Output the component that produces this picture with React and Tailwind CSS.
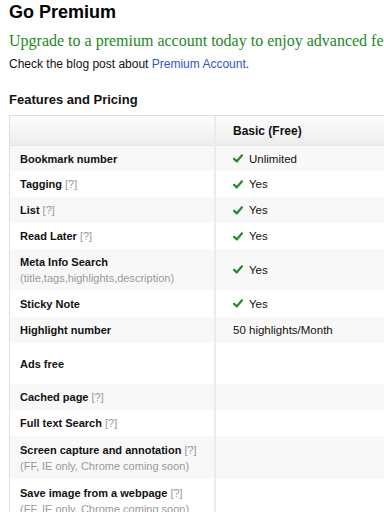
import React from "react";

const Check = () => (
  <svg width="10" height="9" viewBox="0 0 10 9" className="mr-[6px] shrink-0">
    <path d="M1 4.8 L3.8 7.4 L9 1.3" fill="none" stroke="#1e8a1e" strokeWidth="2.2" strokeLinecap="round" strokeLinejoin="round" />
  </svg>
);

const Q = () => <span className="font-normal text-[#999]"> [?]</span>;

const rows = [
  { label: "Bookmark number", value: "Unlimited", check: true, h: "h-[25px]" },
  { label: "Tagging", q: true, value: "Yes", check: true, h: "h-[26px]" },
  { label: "List", q: true, value: "Yes", check: true, h: "h-[26px]" },
  { label: "Read Later", q: true, value: "Yes", check: true, h: "h-[26px]" },
  { label: "Meta Info Search", sub: "(title,tags,highlights,description)", value: "Yes", check: true, h: "h-[41px]" },
  { label: "Sticky Note", value: "Yes", check: true, h: "h-[27px]" },
  { label: "Highlight number", value: "50 highlights/Month", h: "h-[26px]" },
  { label: "Ads free", h: "h-[41px]" },
  { label: "Cached page", q: true, h: "h-[26px]" },
  { label: "Full text Search", q: true, h: "h-[26px]" },
  { label: "Screen capture and annotation", q: true, sub: "(FF, IE only, Chrome coming soon)", h: "h-[43px]" },
  { label: "Save image from a webpage", q: true, sub: "(FF, IE only, Chrome coming soon)", h: "h-[43px]" },
];

export default function App() {
  return (
    <div className="w-[384px] h-[512px] overflow-hidden bg-white" style={{ fontFamily: '"Liberation Sans", Arial, sans-serif' }}>
      <div className="w-[640px] pl-[9px]">
        <h1 className="pt-[1px] text-[18px] leading-[22px] font-bold text-black">Go Premium</h1>
        <p className="mt-[8px] text-[16px] leading-[20px] text-[#1a8a1a] whitespace-nowrap" style={{ fontFamily: '"Liberation Serif", Georgia, serif' }}>
          Upgrade to a premium account today to enjoy advanced features and support Diigo.
        </p>
        <p className="mt-[5px] text-[12px] leading-[16px] text-[#111]">
          Check the blog post about <span className="text-[#3355cc]">Premium Account</span>.
        </p>
        <h2 className="mt-[20px] text-[13px] leading-[16px] font-bold text-[#111]">Features and Pricing</h2>
        <div className="mt-[7px] w-[600px] border-l border-t border-[#dedede] text-[#111]">
          <div className="flex h-[30px] bg-gradient-to-b from-[#fdfdfd] to-[#ededed] border-b border-[#e6e6e6]">
            <div className="w-[206px] shrink-0 border-r-2 border-[#ebebeb]" />
            <div className="flex items-center pl-[17px] text-[12px] font-bold">Basic (Free)</div>
          </div>
          {rows.map((r, i) => (
            <div key={i} className={`flex ${r.h} ${i % 2 === 0 ? "bg-[#f8f8f8]" : "bg-white"}`}>
              <div className="w-[206px] shrink-0 border-r-2 border-[#ebebeb] flex flex-col justify-center pl-[10px] text-[11px] leading-[16px]">
                <div className="font-bold">
                  {r.label}
                  {r.q && <Q />}
                </div>
                {r.sub && <div className="text-[#999]">{r.sub}</div>}
              </div>
              <div className="flex items-center pl-[17px] text-[11.5px] leading-[16px]">
                {r.check && <Check />}
                {r.value}
              </div>
            </div>
          ))}
        </div>
      </div>
    </div>
  );
}
